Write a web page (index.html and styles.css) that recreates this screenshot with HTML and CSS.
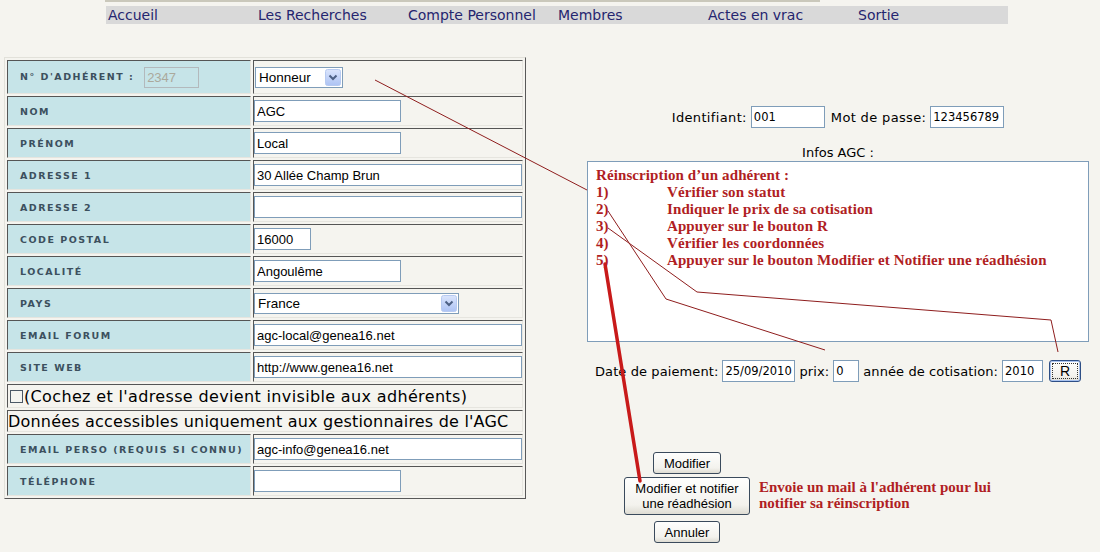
FILE: index.html
```html
<!DOCTYPE html>
<html lang="fr">
<head>
<meta charset="utf-8">
<title>Fiche adhérent</title>
<link rel="stylesheet" href="styles.css">
</head>
<body>
<div class="topline"></div>
<nav class="menu">
  <a href="#">Accueil</a>
  <a href="#">Les Recherches</a>
  <a href="#">Compte Personnel</a>
  <a href="#">Membres</a>
  <a href="#">Actes en vrac</a>
  <a href="#">Sortie</a>
</nav>
<main class="page">
  <table class="fiche">
    <tr class="r-first">
      <th class="lbl">N° d'adhérent : <input class="num" value="2347" disabled></th>
      <td class="val">
        <span class="sel sel-statut">
          <select><option>Honneur</option></select>
          <svg class="sel-btn" width="16" height="17" viewBox="0 0 16 17" aria-hidden="true"><defs><linearGradient id="ga" x1="0" y1="0" x2="0" y2="1"><stop offset="0" stop-color="#dbe5fc"/><stop offset="1" stop-color="#adc3f4"/></linearGradient></defs><rect x="0.5" y="0.5" width="15" height="16" rx="2" fill="url(#ga)" stroke="#b7caf1"/><path d="M4.5 6.5 L8 10 L11.5 6.5" fill="none" stroke="#4d6185" stroke-width="2"/></svg>
        </span>
      </td>
    </tr>
    <tr><th class="lbl">Nom</th><td class="val"><input class="w-mid" value="AGC"></td></tr>
    <tr><th class="lbl">Prénom</th><td class="val"><input class="w-mid" value="Local"></td></tr>
    <tr><th class="lbl">Adresse 1</th><td class="val"><input class="w-full" value="30 Allée Champ Brun"></td></tr>
    <tr><th class="lbl">Adresse 2</th><td class="val"><input class="w-full" value=""></td></tr>
    <tr><th class="lbl">Code postal</th><td class="val"><input class="w-cp" value="16000"></td></tr>
    <tr><th class="lbl">Localité</th><td class="val"><input class="w-mid" value="Angoulême"></td></tr>
    <tr>
      <th class="lbl">Pays</th>
      <td class="val">
        <span class="sel sel-pays">
          <select><option>France</option></select>
          <svg class="sel-btn" width="16" height="17" viewBox="0 0 16 17" aria-hidden="true"><defs><linearGradient id="gb" x1="0" y1="0" x2="0" y2="1"><stop offset="0" stop-color="#dbe5fc"/><stop offset="1" stop-color="#adc3f4"/></linearGradient></defs><rect x="0.5" y="0.5" width="15" height="16" rx="2" fill="url(#gb)" stroke="#b7caf1"/><path d="M4.5 6.5 L8 10 L11.5 6.5" fill="none" stroke="#4d6185" stroke-width="2"/></svg>
        </span>
      </td>
    </tr>
    <tr><th class="lbl">Email forum</th><td class="val"><input class="w-full" value="agc-local@genea16.net"></td></tr>
    <tr><th class="lbl">Site web</th><td class="val"><input class="w-full" value="http://www.genea16.net"></td></tr>
    <tr class="r-check"><td class="note note-check" colspan="2"><input type="checkbox" class="chk">(Cochez et l'adresse devient invisible aux adhérents)</td></tr>
    <tr class="r-info"><td class="note" colspan="2">Données accessibles uniquement aux gestionnaires de l'AGC</td></tr>
    <tr><th class="lbl">Email perso (requis si connu)</th><td class="val"><input class="w-full" value="agc-info@genea16.net"></td></tr>
    <tr><th class="lbl">Téléphone</th><td class="val"><input class="w-mid" value=""></td></tr>
  </table>

  <section class="side">
    <div class="login">
      <label>Identifiant:</label><input class="r-in w-id" value="001">
      <label class="gap">Mot de passe:</label><input class="r-in w-id" value="123456789">
    </div>
    <div class="infos-lbl">Infos AGC :</div>
    <div class="infos">
      <p class="infos-title">Réinscription d’un adhérent :</p>
      <ol class="steps">
        <li><span class="n">1)</span><span>Vérifier son statut</span></li>
        <li><span class="n">2)</span><span>Indiquer le prix de sa cotisation</span></li>
        <li><span class="n">3)</span><span>Appuyer sur le bouton R</span></li>
        <li><span class="n">4)</span><span>Vérifier les coordonnées</span></li>
        <li><span class="n">5)</span><span>Appuyer sur le bouton Modifier et Notifier une réadhésion</span></li>
      </ol>
    </div>
    <div class="paiement">
      <label>Date de paiement:</label><input class="r-in w-date" value="25/09/2010">
      <label>prix:</label><input class="r-in w-prix" value="0">
      <label>année de cotisation:</label><input class="r-in w-annee" value="2010">
      <button class="btn btn-r"><span>R</span></button>
    </div>
    <div class="actions">
      <div class="btns">
        <button class="btn btn-mod">Modifier</button>
        <button class="btn btn-notif">Modifier et notifier<br>une réadhésion</button>
        <button class="btn btn-ann">Annuler</button>
      </div>
      <p class="hint">Envoie un mail à l'adhérent pour lui<br>notifier sa réinscription</p>
    </div>
  </section>
</main>

<svg class="annot" width="1100" height="552" viewBox="0 0 1100 552" aria-hidden="true">
  <g fill="none" stroke="#8e1d1d" stroke-width="1">
    <polyline points="375,80 587,190"/>
    <polyline points="608,211 666,299 825,350"/>
    <polyline points="608,228 697,292 1051,320 1058,352"/>
  </g>
  <line x1="605" y1="264" x2="640" y2="481" stroke="#c81a1a" stroke-width="3.5" stroke-linecap="round"/>
</svg>
</body>
</html>
```
FILE: styles.css
```css
* { box-sizing: border-box; }
html, body { margin: 0; padding: 0; }
body {
  width: 1100px;
  height: 552px;
  overflow: hidden;
  position: relative;
  background: #f5f4ef;
  font-family: "DejaVu Sans", Verdana, sans-serif;
  color: #000;
}

/* top menu */
.topline {
  margin-left: 105px;
  width: 715px;
  height: 2px;
  background: #cac8bb;
}
.menu {
  display: flex;
  margin: 4px 0 0 106px;
  width: 902px;
  height: 18px;
  background: #d9d9d9;
}
.menu a {
  width: 150px;
  padding-left: 2px;
  font-size: 14px;
  line-height: 18px;
  color: #25256f;
  text-decoration: none;
}

.page {
  display: flex;
  align-items: flex-start;
  margin-top: 33px;
}

/* form table */
.fiche {
  margin-left: 4px;
  width: 522px;
  table-layout: fixed;
  border-collapse: separate;
  border-spacing: 2px;
  border: 1px solid;
  border-color: #e2e1da #585858 #585858 #e2e1da;
}
.fiche tr { height: 30px; }
.fiche tr.r-first { height: 34px; }
.fiche tr.r-check { height: 24px; }
.fiche tr.r-info { height: 22px; }
.fiche th, .fiche td {
  padding: 0;
  vertical-align: middle;
  border: 1px solid;
  border-color: #555 #e6e5df #e6e5df #555;
}
.lbl {
  width: 244px;
  padding-left: 12px !important;
  background: #c6e4e8;
  text-align: left;
  font-family: "DejaVu Sans", Verdana, sans-serif;
  font-weight: bold;
  font-size: 9.5px;
  letter-spacing: 1.5px;
  text-transform: uppercase;
  color: #3c505e;
  white-space: nowrap;
}
.val { padding-left: 0; }

.fiche input:not(.chk) {
  height: 22px;
  margin: 0;
  padding: 0 2px;
  border: 1px solid #7f9db9;
  background: #fff;
  font: 13px "Liberation Sans", Arial, sans-serif;
  color: #000;
  vertical-align: middle;
}
.w-full { width: 268px; }
.w-mid { width: 147px; }
.w-cp { width: 57px; }
.fiche input.num {
  width: 55px;
  height: 21px;
  margin-left: 5px;
  background: transparent;
  border-color: #b3b9bc;
  color: #aba99c;
  font-size: 13px;
  letter-spacing: 0;
  font-weight: normal;
}

/* select look-alike */
.sel {
  position: relative;
  display: inline-block;
  vertical-align: middle;
}
.sel select {
  appearance: none;
  -webkit-appearance: none;
  height: 21px;
  margin: 0;
  padding: 0 0 0 3px;
  border: 1px solid #7f9db9;
  border-radius: 0;
  background: #fff;
  font: 13.5px "Liberation Sans", Arial, sans-serif;
  color: #000;
}
.sel-statut select { width: 88px; margin-left: 1px; }
.sel-pays select { width: 205px; }
.sel-btn {
  position: absolute;
  right: 2px;
  top: 2px;
}

.note {
  font-size: 16px;
  letter-spacing: 0.2px;
  color: #000;
  white-space: nowrap;
  background: transparent;
}
.note-check { letter-spacing: 0.35px; }
.chk {
  appearance: none;
  -webkit-appearance: none;
  width: 13px;
  height: 13px;
  margin: 0 1px 0 2px;
  border: 1px solid #4b5866;
  background: #f4f4f0;
  vertical-align: -1px;
}

/* right side */
.side {
  margin-left: 61px;
  width: 502px;
  padding-top: 49px;
  font-size: 13px;
}
.login, .paiement {
  display: flex;
  justify-content: center;
  align-items: center;
  gap: 4px;
}
.login { letter-spacing: 0.35px; }
.login .gap { margin-left: 2px; }
.paiement { letter-spacing: 0.1px; }
.r-in {
  height: 22px;
  margin: 0;
  padding: 0 2px;
  border: 1px solid #7f9db9;
  background: #fff;
  font: 11.5px "DejaVu Sans", Verdana, sans-serif;
  letter-spacing: 0;
  color: #000;
}
.w-id { width: 74px; }
.w-date { width: 73px; }
.w-prix { width: 26px; }
.w-annee { width: 41px; }

.infos-lbl {
  margin-top: 17px;
  line-height: 16px;
  text-align: center;
}
.infos {
  height: 181px;
  border: 1px solid #7f9db9;
  background: #fff;
  padding: 5px 8px 0;
  font: bold 15px "Liberation Serif", "Times New Roman", serif;
  letter-spacing: 0.1px;
  line-height: 17px;
  color: #b01e23;
  overflow: hidden;
}
.infos-title { margin: 0; }
.steps {
  list-style: none;
  margin: 0;
  padding: 0;
}
.steps li { display: flex; }
.steps .n { width: 71px; flex: none; }

.paiement { margin-top: 18px; }

.btn {
  margin: 0;
  padding: 0 6px;
  height: 22px;
  border: 1px solid #3a4a5c;
  border-radius: 3px;
  background: linear-gradient(#fefefd, #f3f2ed 75%, #dedcd3);
  font: 13px "Liberation Sans", Arial, sans-serif;
  letter-spacing: 0;
  color: #000;
}
.btn-r {
  width: 32px;
  padding: 2px;
  margin-left: 2px;
  border-color: #2e4f86;
  box-shadow: inset 0 0 0 1px #a9c3f0;
  font-size: 14px;
}
.btn-r span {
  display: block;
  height: 100%;
  line-height: 14px;
  border: 1px dotted #333;
}

.actions {
  display: flex;
  align-items: flex-start;
  margin-top: 70px;
  margin-left: 37px;
}
.btns {
  width: 126px;
  display: flex;
  flex-direction: column;
  align-items: center;
}
.btn-mod { width: 68px; }
.btn-notif { width: 126px; height: 38px; margin-top: 3px; line-height: 15px; }
.btn-ann { width: 66px; margin-top: 6px; }
.hint {
  margin: 27px 0 0 9px;
  font: bold 15px "Liberation Serif", "Times New Roman", serif;
  line-height: 16px;
  color: #b01e23;
  white-space: nowrap;
}

.annot {
  position: absolute;
  left: 0;
  top: 0;
  pointer-events: none;
}
```
